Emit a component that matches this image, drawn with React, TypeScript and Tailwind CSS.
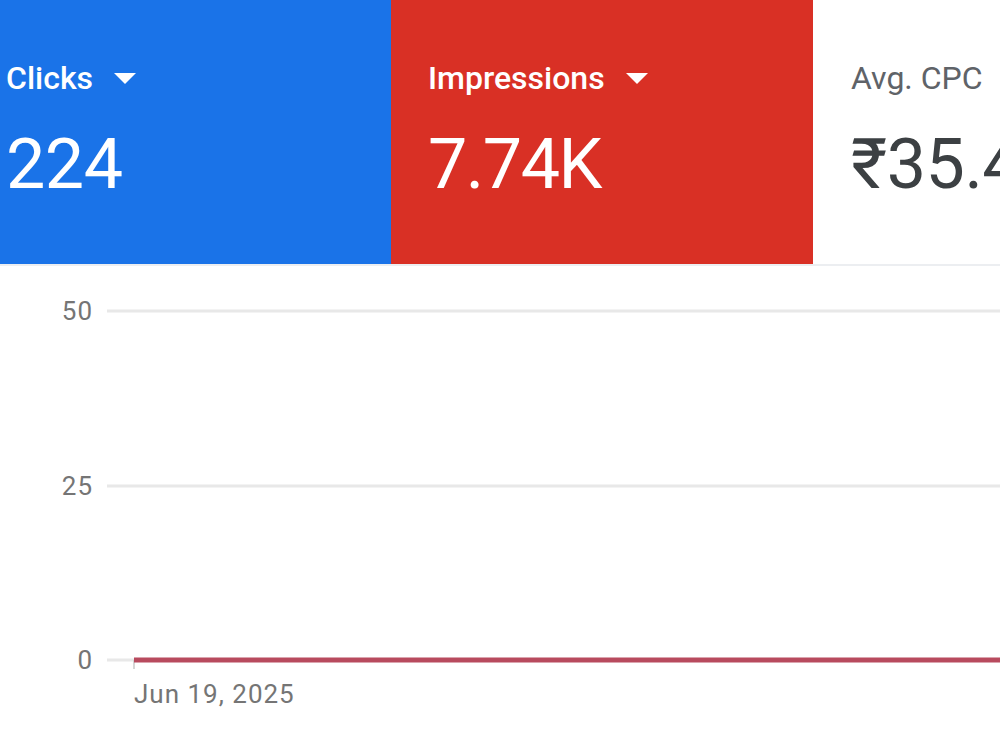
import React from "react";

function Caret({ color }: { color: string }) {
  return (
    <svg width="22" height="12" viewBox="0 0 22 12" className="ml-[21px] mt-[2px]">
      <path d="M0 0 L22 0 L11 11 Z" fill={color} />
    </svg>
  );
}

export default function App() {
  const font = { fontFamily: "Roboto, 'Noto Sans', sans-serif" };
  return (
    <div className="w-[1000px] h-[749px] bg-white overflow-hidden" style={font}>
      <div className="flex h-[266px] border-b-2 border-[#eceef1]">
        <div className="w-[422px] -ml-[31px] shrink-0 bg-[#1a73e8] pl-[37px] pt-[60px] text-white">
          <div className="flex items-center h-[36px]">
            <span className="text-[32px] font-medium leading-none">Clicks</span>
            <Caret color="#ffffff" />
          </div>
          <div className="text-[70px] leading-none mt-[33px] tracking-[-0.5px]">224</div>
        </div>
        <div className="w-[422px] shrink-0 bg-[#d93025] pl-[37px] pt-[60px] text-white">
          <div className="flex items-center h-[36px]">
            <span className="text-[32px] font-medium leading-none">Impressions</span>
            <Caret color="#ffffff" />
          </div>
          <div className="text-[70px] leading-none mt-[33px] tracking-[-1.5px]">7.74K</div>
        </div>
        <div className="flex-1 pl-[38px] pt-[60px] whitespace-nowrap overflow-hidden">
          <div className="flex items-center h-[36px]">
            <span className="text-[32px] leading-none text-[#5f6368]">Avg. CPC</span>
          </div>
          <div className="text-[70px] leading-none mt-[33px] text-[#3c4043] tracking-[-0.5px]">₹35.42</div>
        </div>
      </div>
      <svg width="1000" height="483" viewBox="0 0 1000 483" className="block">
        <g fill="#757575" fontSize="26" textAnchor="end" style={{ ...font, letterSpacing: "1px" }}>
          <text x="93" y="54">50</text>
          <text x="93" y="229">25</text>
          <text x="93" y="403">0</text>
        </g>
        <line x1="107" y1="45" x2="1000" y2="45" stroke="#e8e8e8" strokeWidth="3" />
        <line x1="107" y1="220" x2="1000" y2="220" stroke="#e8e8e8" strokeWidth="3" />
        <line x1="107" y1="394" x2="1000" y2="394" stroke="#e8e8e8" strokeWidth="3" />
        <line x1="134" y1="394" x2="134" y2="403" stroke="#d6d6d6" strokeWidth="2" />
        <line x1="134" y1="394" x2="1000" y2="394" stroke="#b84a5e" strokeWidth="5" />
        <text x="134" y="437" fill="#757575" fontSize="26" style={{ ...font, letterSpacing: "1px" }}>Jun 19, 2025</text>
      </svg>
    </div>
  );
}
